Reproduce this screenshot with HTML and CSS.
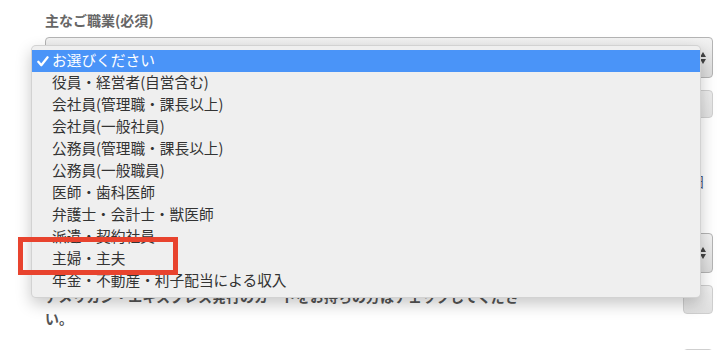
FILE: index.html
```html
<!DOCTYPE html>
<html lang="ja">
<head>
  <meta charset="UTF-8" />
  <title>ご職業の選択</title>
  <link rel="stylesheet" href="styles.css">
</head>
<body>
  <div class="form">
    <div class="label">主なご職業(必須)</div>
    <div class="select">
      <span class="arrows"><i class="up"></i><i class="down"></i></span>
    </div>
    <div class="input"></div>
    <div class="date"><span class="day">日</span></div>
    <div class="select second">
      <span class="arrows"><i class="up"></i><i class="down"></i></span>
    </div>
    <div class="amex">
      <p>アメリカン・エキスプレス発行のカードをお持ちの方はチェックしてください。</p>
      <div class="checkbox"></div>
    </div>
    <div class="checkbox last"></div>
  </div>

  <ul class="menu">
    <li class="selected">
      <svg class="check" width="12" height="11" viewBox="0 0 12 11">
        <path d="M1.3 5.8 L4.3 9.2 L10.6 1.3" fill="none" stroke="#fff" stroke-width="2.3" stroke-linecap="round" stroke-linejoin="round"/>
      </svg>お選びください
    </li>
    <li>役員・経営者(自営含む)</li>
    <li>会社員(管理職・課長以上)</li>
    <li>会社員(一般社員)</li>
    <li>公務員(管理職・課長以上)</li>
    <li>公務員(一般職員)</li>
    <li>医師・歯科医師</li>
    <li>弁護士・会計士・獣医師</li>
    <li>派遣・契約社員</li>
    <li>主婦・主夫</li>
    <li>年金・不動産・利子配当による収入</li>
  </ul>

  <div class="callout"></div>
</body>
</html>
```

FILE: styles.css
```css
body {
  margin: 0;
  background: #fff;
  font-family: "Noto Sans CJK JP", "Noto Sans", sans-serif;
  color: #333;
}

.form {
  width: 668px;
  padding: 10px 0 0 45px;
}

.label {
  font-size: 14px;
  font-weight: bold;
  line-height: 20px;
  color: #666;
}

.select {
  margin-top: 7px;
  height: 39px;
  border: 1px solid #b4b4b4;
  border-radius: 4px;
  background: linear-gradient(#f2f2f2, #dcdcdc);
  display: flex;
  justify-content: flex-end;
  align-items: center;
  padding-right: 6px;
}

.select.second {
  margin-top: 42px;
  height: 38px;
}

.arrows {
  display: flex;
  flex-direction: column;
  gap: 2px;
}

.arrows i {
  width: 0;
  height: 0;
  border-left: 3px solid transparent;
  border-right: 3px solid transparent;
}

.arrows .up {
  border-bottom: 5px solid #444;
}

.arrows .down {
  border-top: 5px solid #444;
}

.input {
  margin-top: 12px;
  height: 26px;
  border: 1px solid #d0d0d0;
  border-radius: 4px;
  background: linear-gradient(#ececec, #e2e2e2);
}

.date {
  margin-top: 53px;
  display: flex;
  justify-content: flex-end;
  padding-right: 8px;
  font-size: 14px;
  line-height: 20px;
}

.day {
  color: #4d5b7c;
}

.amex {
  margin-top: 12px;
  display: flex;
  justify-content: space-between;
  align-items: flex-start;
}

.amex p {
  margin: 0;
  width: 478px;
  font-size: 14px;
  font-weight: bold;
  line-height: 22px;
  color: #555;
}

.checkbox {
  width: 28px;
  height: 27px;
  border: 1px solid #cfcfcf;
  border-radius: 4px;
  background: linear-gradient(#f0f0f0, #e0e0e0);
  flex-shrink: 0;
}

.checkbox.last {
  margin: 20px 0 0 auto;
}

.menu {
  position: absolute;
  left: 31px;
  top: 45px;
  width: 670px;
  margin: 0;
  padding: 4px 0 5px;
  list-style: none;
  background: #efefef;
  border: 1px solid rgba(0, 0, 0, 0.12);
  box-sizing: border-box;
  border-radius: 5px;
  box-shadow: 0 6px 16px rgba(0, 0, 0, 0.22);
}

.menu li {
  height: 22px;
  line-height: 20px;
  padding-left: 20px;
  font-size: 14.7px;
  color: #333;
  white-space: nowrap;
}

.menu li.selected {
  position: relative;
  background: #4a94f8;
  color: #fff;
}

.check {
  position: absolute;
  left: 5px;
  top: 6px;
}

.callout {
  position: absolute;
  left: 18px;
  top: 237px;
  width: 150px;
  height: 28px;
  border: 5px solid #e8432e;
}
```
